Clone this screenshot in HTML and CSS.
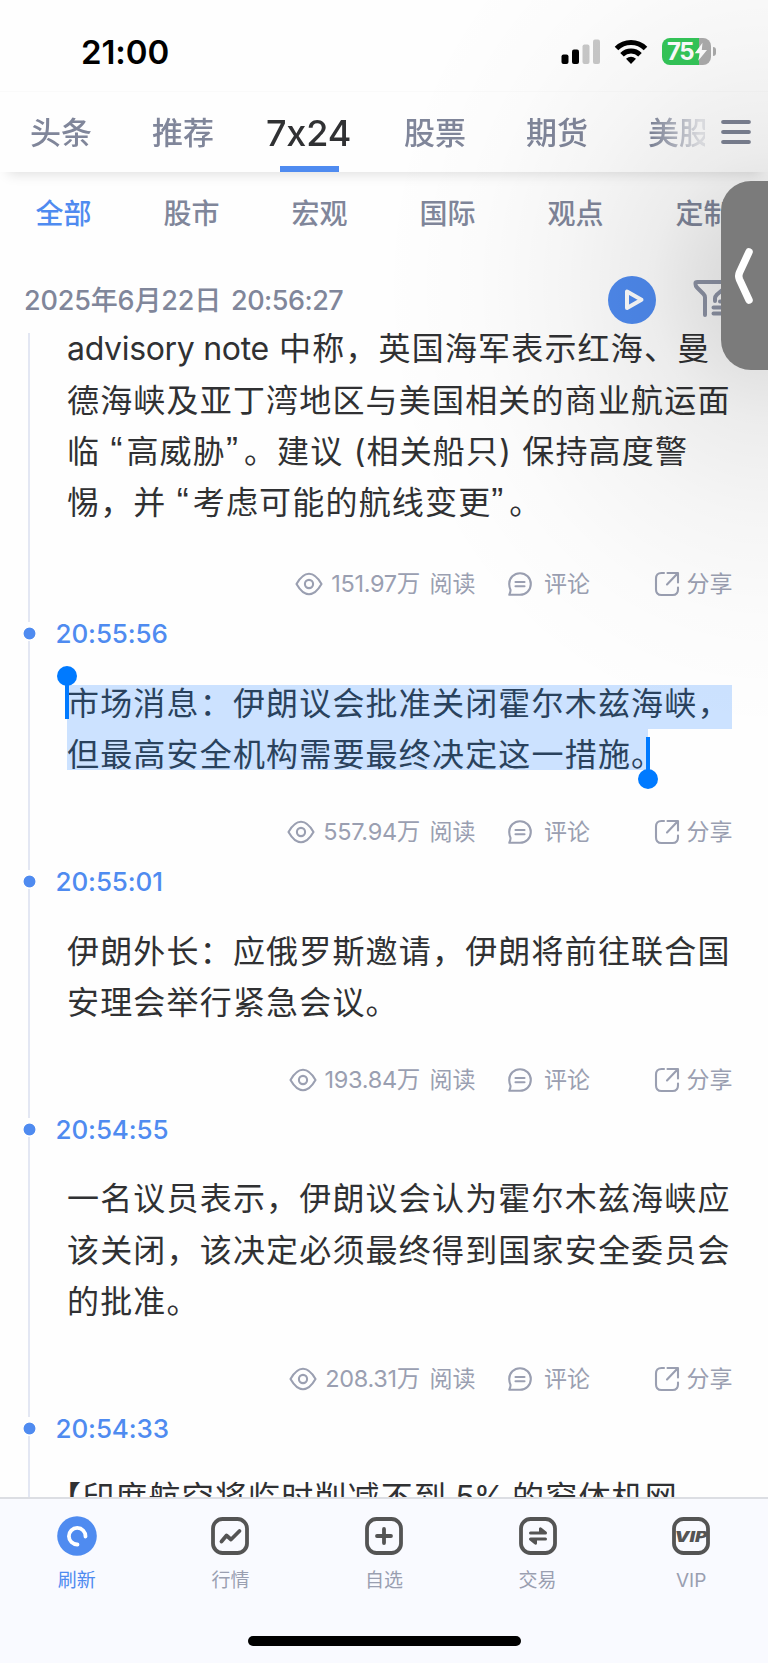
FILE: index.html
```html
<!DOCTYPE html>
<html lang="zh-CN">
<head>
<meta charset="utf-8">
<title>7x24</title>
<link rel="stylesheet" href="styles.css">
</head>
<body>
<svg class="defs" aria-hidden="true">
  <symbol id="eye" viewBox="0 0 28 24"><path d="M1.500 12C3.500 8.500 7.500 1.800 14 1.800S24.500 8.500 26.500 12C24.500 15.500 20.500 22.200 14 22.200S3.500 15.500 1.500 12Z"/><circle cx="14" cy="12" r="4.100"/></symbol>
  <symbol id="comment" viewBox="0 0 26 26"><path d="M2.300 23.800H13A10.800 10.800 0 1 0 2.200 13C2.200 15.500 3 17.600 3.500 18.800C3.700 20.500 3 22 2.300 23.800Z"/><path d="M8.500 11h9M8.500 15.200h9"/></symbol>
  <symbol id="share" viewBox="0 0 26 26"><path d="M10 2H7.500Q2 2 2 7.500V18.500Q2 24 7.500 24H18.500Q24 24 24 18.500V16.500M13.500 2H24V11.500M23.500 2.500L13 13.500"/></symbol>
</svg>
<div class="phone">
  <header class="status">
    <span class="clock">21:00</span>
    <div class="status-icons">
      <svg width="40" height="26" viewBox="0 0 40 26"><rect x=".5" y="15.500" width="7" height="9.500" rx="2"/><rect x="11" y="10.500" width="7" height="14.500" rx="2"/><g fill="#c8c8c8"><rect x="21.500" y="5.500" width="7" height="19.500" rx="2"/><rect x="32" y="0.500" width="7" height="24.500" rx="2"/></g></svg>
      <svg class="wifi" width="34" height="26" viewBox="0 0 34 26"><g fill="none" stroke="#000" stroke-width="5"><path d="M2.500 9.500A20.500 20.500 0 0 1 31.500 9.500"/><path d="M8 15.800A12.800 12.800 0 0 1 26 15.800"/></g><path d="M12 19.800Q17 15.800 22 19.800L17 25Z"/></svg>
      <div class="battery"><span class="charge">75</span><svg width="14" height="20" viewBox="0 0 14 20"><path d="M8.500 .8L.8 11.200H5.800L4.200 18.800L13 8H7.800Z"/></svg></div><i class="nub"></i>
    </div>
  </header>

  <nav class="tabs">
    <div class="tab-list">
      <span>头条</span><span>推荐</span><span class="active">7x24</span><span>股票</span><span>期货</span><span>美股</span>
    </div>
    <svg class="menu" width="30" height="26" viewBox="0 0 30 26"><path d="M2.200 3h25.600M2.200 13h25.600M2.200 23h25.600"/></svg>
  </nav>

  <nav class="subtabs"><span class="on">全部</span><span>股市</span><span>宏观</span><span>国际</span><span>观点</span><span>定制</span></nav>

  <div class="datebar">
    <span class="date">2025年6月22日 <b>20:56:27</b></span>
    <svg class="play" width="48" height="48" viewBox="0 0 48 48"><circle cx="24" cy="24" r="24" fill="#4f8bf0"/><path d="M19 15.500V32L33.500 23.800Z"/></svg>
    <svg class="filter" width="40" height="40" viewBox="0 0 40 40"><path d="M12 37V19.500Q12 17.500 10.500 16L4 9.500Q2.500 8 2.500 6V5Q2.500 4 4.500 4H36M22 23V20.500Q22 18.500 24 16.500L34 8M27 23.500H38M20.500 29.500H38M20.500 35.500H38"/></svg>
  </div>

  <main class="feed">
    <article class="item first">
      <div class="copy">
        <p><span class="latin">advisory note</span> 中称，英国海军表示红海、曼</p>
        <p>德海峡及亚丁湾地区与美国相关的商业航运面</p>
        <p>临 <q>“</q>高威胁<q class="close">”</q>。建议 (相关船只) 保持高度警</p>
        <p>惕，并 <q>“</q>考虑可能的航线变更<q class="close">”</q>。</p>
      </div>
      <div class="meta"><span class="reads"><svg class="eye"><use href="#eye"/></svg><em>151.97万</em> 阅读</span><span class="comments"><svg><use href="#comment"/></svg>评论</span><span class="shares"><svg><use href="#share"/></svg>分享</span></div>
    </article>

    <article class="item">
      <time>20:55:56</time>
      <div class="copy selected">
        <p class="sel-a">市场消息：伊朗议会批准关闭霍尔木兹海峡，</p>
        <p class="sel-b">但最高安全机构需要最终决定这一措施。</p>
        <i class="handle start"></i><i class="handle end"></i>
      </div>
      <div class="meta"><span class="reads"><svg class="eye"><use href="#eye"/></svg><em>557.94万</em> 阅读</span><span class="comments"><svg><use href="#comment"/></svg>评论</span><span class="shares"><svg><use href="#share"/></svg>分享</span></div>
    </article>

    <article class="item">
      <time>20:55:01</time>
      <div class="copy">
        <p>伊朗外长：应俄罗斯邀请，伊朗将前往联合国</p>
        <p>安理会举行紧急会议。</p>
      </div>
      <div class="meta"><span class="reads"><svg class="eye"><use href="#eye"/></svg><em>193.84万</em> 阅读</span><span class="comments"><svg><use href="#comment"/></svg>评论</span><span class="shares"><svg><use href="#share"/></svg>分享</span></div>
    </article>

    <article class="item">
      <time>20:54:55</time>
      <div class="copy">
        <p>一名议员表示，伊朗议会认为霍尔木兹海峡应</p>
        <p>该关闭，该决定必须最终得到国家安全委员会</p>
        <p>的批准。</p>
      </div>
      <div class="meta"><span class="reads"><svg class="eye"><use href="#eye"/></svg><em>208.31万</em> 阅读</span><span class="comments"><svg><use href="#comment"/></svg>评论</span><span class="shares"><svg><use href="#share"/></svg>分享</span></div>
    </article>

    <article class="item">
      <time>20:54:33</time>
      <div class="copy"><p class="headline">【印度航空将临时削减不到<span class="percent"> 5% </span>的窄体机网</p></div>
    </article>
  </main>

  <footer class="dock">
    <nav class="dock-items">
      <div class="dock-item current"><svg viewBox="0 0 40 40"><circle cx="20" cy="20" r="19.800" fill="#4f8bf0"/><path d="M20.500 28.500A8.300 8.300 0 1 1 28.500 20.500" fill="none" stroke="#fff" stroke-width="3.800" stroke-linecap="round"/></svg><span>刷新</span></div>
      <div class="dock-item"><svg class="line" viewBox="0 0 40 40"><rect x="3" y="3" width="34" height="34" rx="9.500"/><path d="M11.500 25.500L16.500 19.500L21 23.500L29.500 15"/></svg><span>行情</span></div>
      <div class="dock-item"><svg class="line" viewBox="0 0 40 40"><rect x="3" y="3" width="34" height="34" rx="9.500"/><path d="M13 20H27M20 13V27"/></svg><span>自选</span></div>
      <div class="dock-item"><svg class="line trade" viewBox="0 0 40 40"><rect x="3" y="3" width="34" height="34" rx="9.500"/><path d="M12.500 17H27.500L22.500 12.800V16M27.500 23H12.500L17.500 27.200V24"/></svg><span>交易</span></div>
      <div class="dock-item"><svg class="line" viewBox="0 0 40 40"><rect x="3" y="3" width="34" height="34" rx="9.500"/><text x="3.500" y="25.500" textLength="33" lengthAdjust="spacingAndGlyphs">VIP</text></svg><span>VIP</span></div>
    </nav>
    <i class="home"></i>
  </footer>

  <div class="glow"></div>
  <div class="drawer"><svg width="20" height="56" viewBox="0 0 20 56"><path d="M15 4L5.500 24.500Q4 28 5.500 31.500L15 52"/></svg></div>
</div>
</body>
</html>
```
FILE: styles.css
```css
* { box-sizing: border-box; }
body { margin: 0; background: #fff; }
p { margin: 0; }
em, b { font-style: normal; font-weight: inherit; }
q { quotes: none; display: inline-block; width: 16px; font-family: "Liberation Sans", sans-serif; font-size: 36px; line-height: 1; }
q::before, q::after { content: none; }
q.close { width: 18px; }
.defs { display: none; }

.phone {
  position: relative;
  width: 768px;
  height: 1663px;
  overflow: hidden;
  display: flex;
  flex-direction: column;
  background: #fefefe;
  font-family: Inter, "Noto Sans CJK SC", sans-serif;
  color: #303133;
}

/* status bar */
.status {
  flex: none;
  height: 91px;
  padding: 15px 52px 3px 81px;
  display: flex;
  align-items: center;
  justify-content: space-between;
}
.clock { font-size: 33px; font-weight: 600; letter-spacing: -.1px; color: #000; }
.status-icons { display: flex; align-items: center; }
.wifi { margin: 0 14px 0 13px; }
.battery {
  width: 49px;
  height: 27px;
  border-radius: 8px;
  display: flex;
  align-items: center;
  padding-left: 5px;
  background: linear-gradient(90deg, #34c759 37px, #acacac 37px);
}
.charge { width: 27px; font-size: 24px; line-height: 27px; font-weight: 700; color: #fff; letter-spacing: -1.400px; }
.battery svg { fill: #fff; }
.nub { width: 3px; height: 9px; margin-left: 2px; border-radius: 0 4px 4px 0; background: #acacac; }

/* main tabs */
.tabs {
  flex: none;
  height: 81px;
  display: flex;
  align-items: center;
  justify-content: space-between;
  padding-right: 17px;
  border-top: 1px solid #fafafa;
  background: #fefefe;
  box-shadow: 0 10px 12px -8px rgba(0, 0, 0, .13);
  font-size: 31px;
  font-weight: 500;
  color: #80869a;
}
.tab-list {
  width: 705px;
  height: 80px;
  padding-left: 30px;
  display: flex;
  overflow: hidden;
  line-height: 82px;
  -webkit-mask-image: linear-gradient(90deg, #000 650px, rgba(0, 0, 0, .2) 700px);
  mask-image: linear-gradient(90deg, #000 650px, rgba(0, 0, 0, .2) 700px);
}
.tab-list span { flex: none; width: 62px; margin-right: 60px; white-space: nowrap; }
.tab-list .active {
  width: 84px;
  margin: 0 54px 0 -8px;
  font-size: 36px;
  letter-spacing: -.2px;
  color: #303133;
  background: linear-gradient(#4f8bf0, #4f8bf0) 14px 74px / 59px 6px no-repeat;
}
.menu { fill: none; stroke: #7d8394; stroke-width: 4.200; stroke-linecap: round; }

/* category row */
.subtabs {
  flex: none;
  height: 84px;
  display: grid;
  grid-template-columns: repeat(6, 128px);
  margin-left: -.5px;
  text-align: center;
  line-height: 84px;
  font-size: 28px;
  font-weight: 500;
  color: #80869a;
}
.subtabs .on { color: #4f8bf0; }

/* date and tools */
.datebar {
  flex: none;
  height: 77px;
  padding: 12px 0 0 24px;
  display: flex;
  align-items: flex-start;
  color: #80869a;
}
.date { width: 584px; font-size: 27px; line-height: 66px; font-weight: 500; letter-spacing: -.170px; white-space: pre; }
.date b { margin-left: 3px; letter-spacing: -.500px; }
.play { margin-top: 7.500px; }
.play path { fill: none; stroke: #fff; stroke-width: 4; stroke-linejoin: round; }
.filter { margin: 10px 0 0 37px; fill: none; stroke: #9096a8; stroke-width: 4; stroke-linecap: round; stroke-linejoin: round; }

/* timeline */
.feed { flex: 1; min-height: 0; overflow: hidden; }
.item {
  padding: 0 36px 23px 67px;
  background: linear-gradient(#e3e7f3, #e3e7f3) 28px 19px / 2px 100% no-repeat;
}
.item.first { height: 289px; background-position: 28px 0; padding-bottom: 0; overflow: hidden; }
.first .copy { margin-top: -9.700px; }
.first .meta { margin-top: 40.500px; }
time {
  display: block;
  height: 23px;
  margin: 0 0 32.700px -67px;
  padding-left: 55.500px;
  font-size: 26px;
  line-height: 24px;
  font-weight: 500;
  letter-spacing: -.100px;
  color: #4f8bf0;
  background: radial-gradient(circle, #4f8bf0 5.500px, transparent 6.300px) 22px 4px / 15px 15px no-repeat;
}
.copy { font-size: 32px; line-height: 51.200px; letter-spacing: 1.180px; white-space: nowrap; }
.copy p { height: 51.200px; }
.latin { letter-spacing: -.320px; }
.headline { margin-left: -18px; }
.percent { letter-spacing: -1px; white-space: pre; }
.selected { position: relative; color: #2a425d; }
.sel-a { background: linear-gradient(#cce2ff, #cce2ff) 0 7.500px / 665px 100% no-repeat; }
.sel-b { background: linear-gradient(#cce2ff, #cce2ff) 0 -10px / 581px 100% no-repeat; }
.handle { position: absolute; width: 4px; height: 38px; background: #007aff; }
.handle::before { content: ""; position: absolute; left: -8px; width: 20px; height: 20px; border-radius: 50%; background: #007aff; }
.start { left: -2px; top: 3.500px; }
.start::before { top: -15px; }
.end { left: 579px; top: 59px; }
.end::before { bottom: -14px; }

.meta {
  height: 30px;
  margin-top: 36.800px;
  display: grid;
  grid-template-columns: 408.500px 146.500px 110px;
  grid-template-rows: 30px;
  line-height: 30px;
  font-size: 23px;
  color: #9a9fb1;
  white-space: nowrap;
}
.meta span { display: flex; align-items: center; }
.meta svg { flex: none; width: 26px; height: 26px; fill: none; stroke: #9a9fb1; stroke-width: 2.100; stroke-linejoin: round; stroke-linecap: round; }
.meta .reads { justify-content: flex-end; white-space: pre; }
.meta .eye { width: 28px; height: 24px; margin-right: 8px; }
.meta em { margin-right: 3px; font-size: 23.500px; letter-spacing: -.3px; }
.comments { padding-left: 31.500px; }
.comments svg { margin-right: 11px; }
.shares svg { width: 26px; margin: 0 6.500px 0 32px; }

/* bottom dock */
.dock { flex: none; height: 166px; border-top: 2px solid #dcdee3; background: #f9faff; display: flex; flex-direction: column; align-items: center; }
.dock-items { width: 768px; height: 137px; display: grid; grid-template-columns: repeat(5, 1fr); }
.dock-item { display: flex; flex-direction: column; align-items: center; padding-top: 17px; font-size: 19px; line-height: 24px; color: #9a9fb1; }
.dock-item svg { width: 40px; height: 40px; margin-bottom: 13px; }
.dock-item.current { color: #4f8bf0; }
.line { fill: none; stroke: #545454; stroke-width: 3.800; stroke-linecap: round; stroke-linejoin: round; }
.trade path { stroke-width: 3; }
.line text { font: italic 900 14px Inter, sans-serif; fill: #545454; stroke: none; }
.home { width: 273px; height: 10px; border-radius: 5px; background: #000; }

/* floating drawer handle and its soft shade */
.glow {
  position: absolute;
  inset: 0 0 auto auto;
  width: 420px;
  height: 745px;
  pointer-events: none;
  background: radial-gradient(ellipse 390px 450px at 100% 285px, rgba(0, 0, 0, .16), rgba(0, 0, 0, .125) 14%, rgba(0, 0, 0, .07) 30%, rgba(0, 0, 0, .035) 52%, rgba(0, 0, 0, .013) 75%, transparent);
}
.drawer {
  position: absolute;
  right: 0;
  top: 181px;
  width: 47px;
  height: 189px;
  border-radius: 30px 0 0 30px;
  background: #7b7b7b;
  display: flex;
  align-items: center;
  padding-left: 13px;
}
.drawer svg { fill: none; stroke: #fff; stroke-width: 7.500; stroke-linecap: round; stroke-linejoin: round; }
```
